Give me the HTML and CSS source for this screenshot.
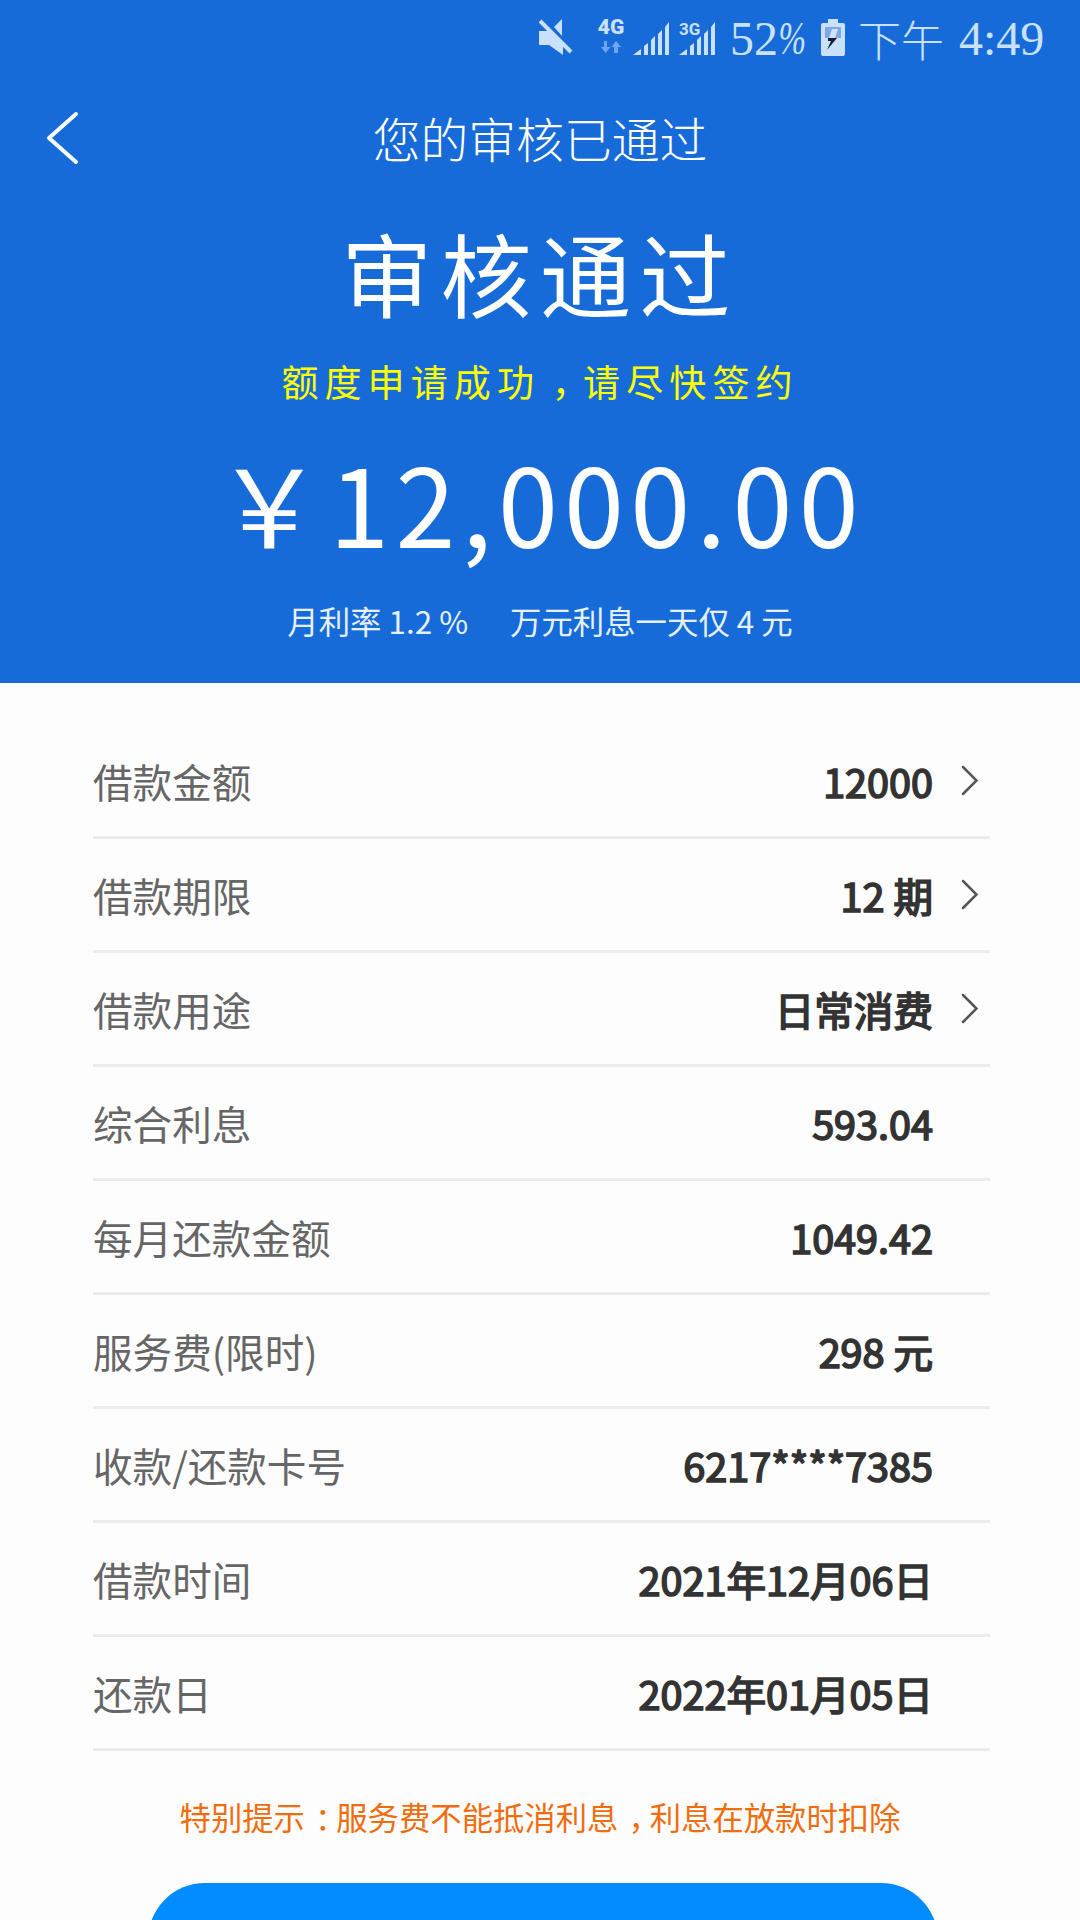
FILE: index.html
```html
<!DOCTYPE html>
<html lang="zh-CN">
<head>
<meta charset="utf-8">
<title>您的审核已通过</title>
<link rel="stylesheet" href="styles.css">
</head>
<body>
<div class="page">
  <header class="hero">
    <div class="status">
      <svg class="mute" width="34" height="36" viewBox="0 0 34 36"><path d="M0 12H9L24 25V36L10 26H0ZM15 8L23 0V17Z"/><path d="M1 2L32 33" class="slash"/></svg>
      <span class="net"><b>4G</b><svg width="20" height="13" viewBox="0 0 20 13"><path d="M3 0H6V6H9.500L4.500 12L0 6H3ZM13 12H17V6H20L15 0L10.500 6H13Z"/></svg></span>
      <svg class="bars" width="37" height="34" viewBox="0 0 37 34"><path d="M0 33L8 27V33ZM11 24L15 21V33H11ZM18 18L22 14V33H18ZM25 12L29 8V33H25ZM32 5L36 0V33H32Z"/></svg>
      <span class="net3"><b>3G</b><svg width="37" height="34" viewBox="0 0 37 34"><path d="M0 33L8 27V33ZM11 24L15 21V33H11ZM18 18L22 14V33H18ZM25 12L29 8V33H25ZM32 5L36 0V33H32Z"/></svg></span>
      <span class="num">52</span><span class="pct"><i>%</i></span>
      <svg class="battery" width="24" height="37" viewBox="0 0 24 37"><path d="M7 0H17V4H22Q24 4 24 6V35Q24 37 22 37H2Q0 37 0 35V6Q0 4 2 4H7Z"/><path d="M4 8H20V19H4Z" fill="#7fa6e6"/><path d="M11 10H17L14 19H20V20H4V19H8Z" fill="#d0e3fb"/><path d="M7 19H16L6 31L10 22H7Z" fill="#14202e"/></svg>
      <span class="ampm">下午</span><span class="time">4:49</span>
    </div>
    <nav class="nav">
      <svg class="back" width="34" height="54" viewBox="0 0 34 54"><path d="M30 3L3 27L30 51"/></svg>
      <h1>您的审核已通过</h1>
    </nav>
    <div class="result">审核通过</div>
    <div class="tip">额度申请成功<span class="mid">，</span>请尽快签约</div>
    <div class="amount">￥12,000.00</div>
    <div class="rate"><span>月利率 1.2 %</span><span>万元利息一天仅 4 元</span></div>
  </header>
  <main class="list">
    <div class="row"><span class="k">借款金额</span><span class="v">12000</span><svg class="go" width="18" height="31" viewBox="0 0 18 31"><path d="M2 2L15.500 15.500L2 29"/></svg></div>
    <div class="row"><span class="k">借款期限</span><span class="v">12 期</span><svg class="go" width="18" height="31" viewBox="0 0 18 31"><path d="M2 2L15.500 15.500L2 29"/></svg></div>
    <div class="row"><span class="k">借款用途</span><span class="v">日常消费</span><svg class="go" width="18" height="31" viewBox="0 0 18 31"><path d="M2 2L15.500 15.500L2 29"/></svg></div>
    <div class="row"><span class="k">综合利息</span><span class="v">593.04</span></div>
    <div class="row"><span class="k">每月还款金额</span><span class="v">1049.42</span></div>
    <div class="row"><span class="k">服务费(限时)</span><span class="v">298 元</span></div>
    <div class="row"><span class="k">收款/还款卡号</span><span class="v">6217****7385</span></div>
    <div class="row"><span class="k">借款时间</span><span class="v">2021年12月06日</span></div>
    <div class="row"><span class="k">还款日</span><span class="v">2022年01月05日</span></div>
  </main>
  <p class="notice">特别提示<span class="mid">：</span>服务费不能抵消利息<span class="mid">，</span>利息在放款时扣除</p>
  <div class="submit"></div>
</div>
</body>
</html>
```
FILE: styles.css
```css
* { box-sizing: border-box; }
body { margin: 0; background: #fdfdfd; font-family: "Noto Sans CJK SC", sans-serif; }
.page { height: 1920px; overflow: hidden; display: flex; flex-direction: column; }
.page > * { flex-shrink: 0; }
svg { display: block; flex: none; }
.hero { height: 683px; background: #176bd9; color: #fff; text-align: center; white-space: nowrap; }

.status { height: 80px; padding: 19px 28px 0 539px; display: flex; align-items: flex-start; color: #c9e1fc; fill: #c9e1fc; }
.mute .slash { stroke: #c9e1fc; stroke-width: 4; }
.net { width: 28px; margin-left: 24px; font: 700 20px/16px Roboto, sans-serif; display: flex; flex-direction: column; align-items: center; }
.net b { font-size: 21px; line-height: 17px; }
.net svg { margin-top: 5px; fill: #6fa5ec; }
.bars { margin: 3px 0 0 8px; }
.net3 { display: grid; margin: 3px 0 0 9px; }
.net3 b { grid-area: 1 / 1; font: 700 17px/14px Roboto, sans-serif; text-align: left; justify-self: start; background: #176bd9; z-index: 1; align-self: start; }
.net3 svg { grid-area: 1 / 1; }
.num, .time { font: 48px/40px "Liberation Serif", serif; }
.num { margin-left: 14px; }
.pct { width: 28px; font: 46px/40px "Liberation Serif", serif; }
.pct i { display: block; width: 40px; transform: scaleX(.72); transform-origin: 0 50%; }
.battery { margin-left: 15px; }
.ampm { margin-left: 13px; font-size: 43px; font-weight: 300; line-height: 38px; }
.time { margin-left: 15px; white-space: nowrap; }

.nav { height: 116px; padding-left: 46px; display: grid; grid-template-columns: 34px 1fr 80px; align-items: center; }
.back { fill: none; stroke: #fff; stroke-width: 4; stroke-linecap: round; stroke-linejoin: round; }
.nav h1 { margin: 0; font-size: 47.800px; font-weight: 300; line-height: 60px; }
.result { height: 150px; font-size: 91px; letter-spacing: 8.400px; line-height: 150px; }
.tip { height: 70px; color: #ff0; font-size: 37px; letter-spacing: 6.100px; line-height: 70px; }
.mid { margin: 0 -.32em 0 .32em; }
.amount { height: 170px; font-size: 108px; letter-spacing: 6.200px; line-height: 170px; }
.rate { height: 70px; display: flex; justify-content: center; gap: 42px; color: #e4f1fd; font-size: 31.400px; line-height: 70px; }

.list { padding: 42px 90px 0 93px; }
.row { height: 114px; display: flex; align-items: center; border-bottom: 3px solid #ececec; font-size: 39.600px; line-height: 60px; }
.k { flex: 1; color: #666; }
.v { margin-right: 57px; color: #333; -webkit-text-stroke: 1.700px #333; }
.go { margin-right: 11px; fill: none; stroke: #555; stroke-width: 2.500; stroke-linecap: round; }
.v:has(+ .go) { margin-right: 28px; }
.notice { height: 132px; margin: 0; color: #f06c0c; font-size: 31.350px; line-height: 132px; text-align: center; }
.submit { width: 790px; height: 114px; margin: 0 0 0 148px; border-radius: 57px; background: #008cff; }
```
